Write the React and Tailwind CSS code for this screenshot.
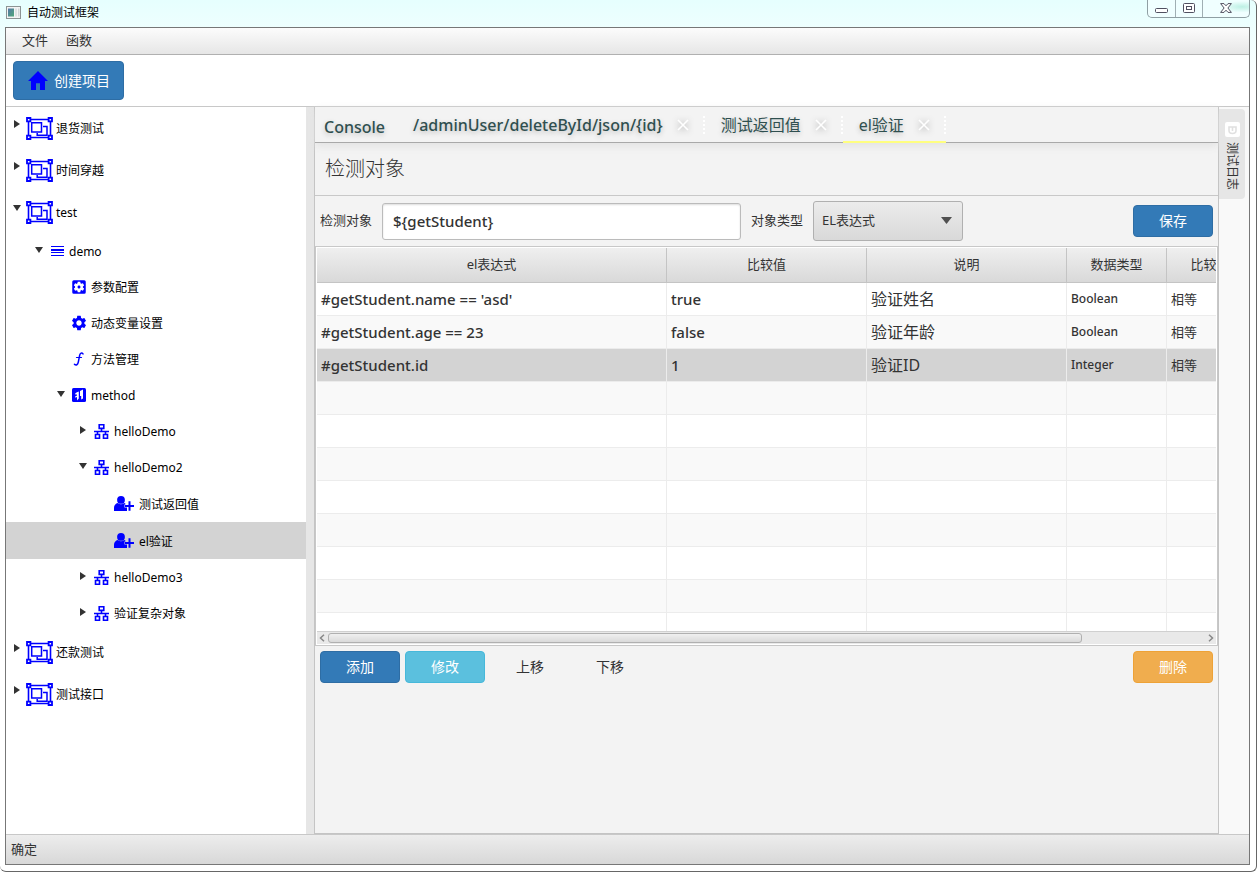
import React from "react";
import { MdHome, MdSettings, MdSettingsApplications } from "react-icons/md";

function GroupIcon() {
  return (
    <svg className="block h-[23px] w-[27px]" viewBox="0 0 27 23" fill="none" stroke="#0000ff" strokeWidth="1.5" aria-hidden="true">
      <path d="M5 2.5H22M5 20.5H22M2.5 5V18M24.5 5V18" strokeWidth="1.6" />
      <path d="M1 1h3.4v3.4H1zM22.6 1H26v3.4h-3.4zM1 18.6h3.4V22H1zM22.6 18.6H26V22h-3.4z" strokeWidth="1.8" />
      <path d="M5.700 5.700h9.800v9.300H5.700z" />
      <path d="M17 9.500h4V18.200H11.200V16" />
    </svg>
  );
}

function ListIcon() {
  return (
    <svg className="block h-3 w-[14px]" viewBox="0 0 14 12" fill="#0000ff" aria-hidden="true">
      <path d="M1 1h13v1H1zM1 4h13v2H1zM1 7h13v1H1zM1 10h13v1H1z" />
    </svg>
  );
}

function FunctionIcon() {
  return (
    <svg className="block h-[14px] w-[14px]" viewBox="0 0 14 14" fill="none" stroke="#0000ff" strokeLinecap="round" aria-hidden="true">
      <path d="M11 1.9C9.8.3 8.1 1 7.7 3.2L6.3 10.2C5.8 12.9 4.100 13.500 2.500 12.300" strokeWidth="1.500" />
      <path d="M4.500 5.500h5" strokeWidth="1.200" />
    </svg>
  );
}

function MethodIcon() {
  return (
    <svg className="block h-[14px] w-[14px]" viewBox="0 0 14 14" aria-hidden="true">
      <rect width="14" height="14" rx="1.5" fill="#0000ff" />
      <path d="M8 3 11 1.500V10.500L9.200 11.500V8H8zM6.800 3.500V10.500L5 12.500V9L3.300 9.800V8.200L5 7.400V6.400H3.300V5.200L5 4.200z" fill="#fff" />
    </svg>
  );
}

function NetworkIcon() {
  return (
    <svg className="block h-[15px] w-[15px]" viewBox="0 0 15 15" fill="none" stroke="#0000ff" strokeWidth="1.6" aria-hidden="true">
      <path d="M5.200.8h4.600v3.600H5.200zM1.500 10.500h4v3.700h-4zM9.500 10.500h4v3.700h-4z" />
      <path d="M7.500 4.300v3.200M0 7.500h15M3.500 7.500v3M11.500 7.500v3" />
    </svg>
  );
}

function PersonAddIcon() {
  return (
    <svg className="block h-[15px] w-5" viewBox="0 0 20 15" fill="#0000ff" aria-hidden="true">
      <circle cx="7" cy="3.900" r="3.900" />
      <path d="M0 15v-3.200C0 9.200 1.600 7.400 3.800 6.900 5.700 8.600 8.300 8.600 10.200 6.900l1.200.7V8.500H10.500V11.500H13V15z" />
      <path d="M14.500 5.200h2v3.700H20v2.200h-3.500v3.700h-2v-3.700H11V8.900h3.500z" />
    </svg>
  );
}

function Disclosure({ state }) {
  return (
    <svg className="mt-[13px] h-2 w-2 shrink-0" viewBox="0 0 8 8" fill="#333" aria-hidden="true">
      {state === "closed" && <path d="M1 0 7 4 1 8z" />}
      {state === "open" && <path d="M0 1H8L4 7z" />}
    </svg>
  );
}

const icons = {
  group: <GroupIcon />,
  list: <ListIcon />,
  config: <MdSettingsApplications className="-m-0.5 block size-[18px]" color="#0000ff" />,
  gear: <MdSettings className="-m-0.5 block size-[18px]" color="#0000ff" />,
  func: <FunctionIcon />,
  method: <MethodIcon />,
  network: <NetworkIcon />,
  person: <PersonAddIcon />,
};

const indents = ["pl-[7px]", "pl-[29px]", "pl-[51px]", "pl-[73px]", "pl-[93px]"];

const tree = [
  { level: 0, icon: "group", label: "退货测试", state: "closed" },
  { level: 0, icon: "group", label: "时间穿越", state: "closed" },
  { level: 0, icon: "group", label: "test", state: "open" },
  { level: 1, icon: "list", label: "demo", state: "open" },
  { level: 2, icon: "config", label: "参数配置" },
  { level: 2, icon: "gear", label: "动态变量设置" },
  { level: 2, icon: "func", label: "方法管理" },
  { level: 2, icon: "method", label: "method", state: "open" },
  { level: 3, icon: "network", label: "helloDemo", state: "closed" },
  { level: 3, icon: "network", label: "helloDemo2", state: "open" },
  { level: 4, icon: "person", label: "测试返回值" },
  { level: 4, icon: "person", label: "el验证", selected: true },
  { level: 3, icon: "network", label: "helloDemo3", state: "closed" },
  { level: 3, icon: "network", label: "验证复杂对象", state: "closed" },
  { level: 0, icon: "group", label: "还款测试", state: "closed" },
  { level: 0, icon: "group", label: "测试接口", state: "closed" },
];

function TreeRow({ level, icon, label, state, selected }) {
  const height = level === 0 ? "h-[42px]" : level === 4 ? "h-[37px]" : "h-9";
  const gap = level === 0 ? "gap-[3px] pl-[5px]" : "gap-[5px] pl-[7px]";
  return (
    <li
      role="treeitem"
      aria-level={level + 1}
      aria-selected={!!selected}
      aria-expanded={state ? state === "open" : undefined}
      className={`flex ${height} ${indents[level]} ${selected ? "bg-[#d3d3d3]" : ""}`}
    >
      <Disclosure state={state} />
      <span className={`flex items-center ${gap}`}>
        {icons[icon]}
        <span className="pt-0.5">{label}</span>
      </span>
    </li>
  );
}

function CloseX() {
  return (
    <svg className="block size-3 drop-shadow-[0_1px_3px_#aaa]" viewBox="0 0 12 12" stroke="#fff" strokeWidth="1.6" aria-hidden="true">
      <path d="M1 1 11 11M11 1 1 11" />
    </svg>
  );
}

function EditorTab({ label, active, weight = "font-normal" }) {
  return (
    <div className={`-mb-px flex h-9 items-center border-b-2 pt-0.5 pl-4 ${active ? "border-[#ffff80]" : "border-transparent"}`}>
      <button type="button" role="tab" aria-selected={!!active} className={`pr-[14px] [text-shadow:0_2px_5px_#bbb] ${weight}`}>
        {label}
      </button>
      <button type="button" aria-label={`关闭 ${label}`}>
        <CloseX />
      </button>
      <span className="ml-[14px] h-[18px] border-l-2 border-dotted border-white" />
    </div>
  );
}

const columns = [
  { title: "el表达式", width: "w-[350px]" },
  { title: "比较值", width: "w-[200px]" },
  { title: "说明", width: "w-[200px]" },
  { title: "数据类型", width: "w-[100px]" },
  { title: "比较方式", width: "w-[100px]" },
];

const rows = [
  ["#getStudent.name == 'asd'", "true", "验证姓名", "Boolean", "相等"],
  ["#getStudent.age == 23", "false", "验证年龄", "Boolean", "相等"],
  ["#getStudent.id", "1", "验证ID", "Integer", "相等"],
  ...Array.from({ length: 8 }, () => ["", "", "", "", ""]),
];

const cellText = ["text-[15px] font-medium", "text-[15px] font-medium", "text-base", "text-xs font-medium", "text-[13px]"];

function DataTable() {
  return (
    <div className="border border-[#c8c8c8] bg-white p-px">
      <div className="h-[383px] overflow-hidden">
        <table className="w-[950px] table-fixed border-separate border-spacing-0">
          <thead>
            <tr>
              {columns.map((c) => (
                <th
                  key={c.title}
                  scope="col"
                  className={`${c.width} h-[35px] border-r border-b border-[#c4c4c4] bg-linear-to-b from-[#efefef] to-[#d9d9d9] p-0 text-[13px] font-normal`}
                >
                  {c.title}
                </th>
              ))}
            </tr>
          </thead>
          <tbody>
            {rows.map((row, r) => (
              <tr key={r} className={r === 2 ? "bg-[#d3d3d3]" : r % 2 ? "bg-[#f9f9f9]" : "bg-white"}>
                {row.map((cell, c) => (
                  <td key={c} className={`h-[33px] overflow-hidden border-r border-b border-[#ececec] px-1 py-0 leading-5 whitespace-nowrap ${cellText[c]}`}>
                    {cell}
                  </td>
                ))}
              </tr>
            ))}
          </tbody>
        </table>
      </div>
      <div className="flex h-[13px] items-center gap-[3px] border-t border-[#d0d0d0] bg-[#e9e9e9] px-0.5">
        <svg className="h-2 w-[6px]" viewBox="0 0 6 8" fill="none" stroke="#888" strokeWidth="1.5" aria-hidden="true">
          <path d="M5 .7 1.500 4 5 7.300" />
        </svg>
        <div className="flex-1">
          <div className="h-[10px] w-[86%] rounded-[3px] border border-[#b0b0b0] bg-linear-to-b from-[#f0f0f0] to-[#dadada]" />
        </div>
        <svg className="h-2 w-[6px]" viewBox="0 0 6 8" fill="none" stroke="#888" strokeWidth="1.5" aria-hidden="true">
          <path d="M1 .7 4.500 4 1 7.300" />
        </svg>
      </div>
    </div>
  );
}

function ActionButton({ children, tone }) {
  return (
    <button type="button" className={`h-8 w-20 rounded-[4px] border text-sm ${tone}`}>
      {children}
    </button>
  );
}

const blueTone = "border-[#2e6da4] bg-[#337ab7] text-white";
const plainTone = "border-transparent";

function TitleBar() {
  return (
    <header className="flex h-[27px] justify-between">
      <div className="flex items-center gap-[6px] pb-0.5 pl-1.5">
        <svg className="h-[13px] w-[15px]" viewBox="0 0 15 13" aria-hidden="true">
          <defs>
            <linearGradient id="appGlass" x1="0" y1="0" x2="1" y2="1">
              <stop offset="0" stopColor="#5577a8" />
              <stop offset="1" stopColor="#4fa878" />
            </linearGradient>
          </defs>
          <rect x=".5" y=".5" width="14" height="12" fill="#f4f4f4" stroke="#8c9494" />
          <rect x="2" y="2.500" width="6" height="8" fill="url(#appGlass)" />
          <rect x="9" y="2.500" width="2" height="8" fill="#dde3e3" />
          <rect x="12" y="2.500" width="1.500" height="8" fill="#cfd6d6" />
        </svg>
        <h1 className="text-xs text-black">自动测试框架</h1>
      </div>
      <div className="mr-1.5 flex h-[18px] rounded-b-[5px] border border-t-0 border-[#8f9fa3] bg-[#f0ffff]">
        <button type="button" aria-label="最小化" className="flex w-7 items-center justify-center border-r border-[#a0afb3]">
          <svg className="mt-1 h-[5px] w-[13px]" viewBox="0 0 13 5" aria-hidden="true">
            <rect x=".5" y=".5" width="12" height="4" rx="1" fill="#fff" stroke="#505060" />
          </svg>
        </button>
        <button type="button" aria-label="最大化" className="flex w-[27px] items-center justify-center border-r border-[#a0afb3] pb-0.5">
          <svg className="h-[10px] w-3" viewBox="0 0 12 10" fill="#fff" stroke="#505060" aria-hidden="true">
            <rect x=".5" y=".5" width="11" height="9" rx="1" />
            <rect x="3.500" y="3.500" width="5" height="3" />
          </svg>
        </button>
        <button type="button" aria-label="关闭" className="flex w-[46px] items-center justify-center bg-radial-[at_85%_40%] from-[#bdf0e4] to-transparent to-40% pb-0.5">
          <svg className="h-[10px] w-3" viewBox="0 0 12 10" fill="#fff" stroke="#505060" strokeLinejoin="round" aria-hidden="true">
            <path d="M.6.6H4L6 2.800 8 .6h3.400L7.900 5l3.500 4.400H8L6 7.200 4 9.400H.6L4.100 5z" />
          </svg>
        </button>
      </div>
    </header>
  );
}

export default function App() {
  return (
    <div className="min-h-screen bg-white font-['Noto_Sans','Noto_Sans_CJK_SC',sans-serif] text-[#333]">
      <div className="mr-px flex min-h-screen flex-col rounded-tr-[6px] rounded-b-[6px] border-r border-b border-[#666] bg-linear-to-b from-[#e6fffe] to-white to-[90px]">
        <TitleBar />
        <div className="mr-[6px] mb-[6px] ml-[5px] flex flex-1 flex-col border border-[#777] bg-white">
          <nav className="flex h-[27px] items-center gap-[18px] border-b border-[#b0b0b0] bg-linear-to-b from-[#fcfcfc] to-[#e6e6e6] pl-4 text-[13px]">
            <button type="button">文件</button>
            <button type="button">函数</button>
          </nav>
          <div className="flex h-[52px] items-center border-b border-[#c8c8c8] pl-[7px]">
            <button type="button" className="flex h-[39px] items-center gap-[6px] rounded-[4px] border border-[#2e6da4] bg-[#337ab7] pr-[13px] pl-[14px] text-sm text-white">
              <MdHome viewBox="2 3 20 17" className="h-[19px] w-5" color="#0000ff" preserveAspectRatio="none" />
              创建项目
            </button>
          </div>
          <div className="flex flex-1">
            <ul role="tree" aria-label="项目" className="w-[300px] shrink-0 text-xs text-black">
              {tree.map((node, i) => (
                <TreeRow key={i} {...node} />
              ))}
            </ul>
            <div className="w-2 shrink-0 bg-[#e6e6e6]" />
            <main className="min-w-0 flex-1 border-r border-b border-l border-[#c4c4c4] bg-[#f3f3f3]">
              <div role="tablist" className="flex h-9 border-b border-[#a9a9a9] text-base text-[#2f4f4f] shadow-[0_3px_8px_#e2e2e2]">
                <button type="button" role="tab" aria-selected="false" className="pt-1 pr-3 pl-[9px] font-medium [text-shadow:0_2px_5px_#bbb]">
                  Console
                </button>
                <EditorTab label="/adminUser/deleteById/json/{id}" weight="font-medium" />
                <EditorTab label="测试返回值" />
                <EditorTab label="el验证" active />
              </div>
              <h2 className="flex h-[53px] items-center border-b border-[#c8c8c8] pl-[10px] text-xl font-light">检测对象</h2>
              <form className="flex h-[50px] items-center pr-[5px] pl-[5px] text-[13px]" onSubmit={(e) => e.preventDefault()}>
                <label htmlFor="target">检测对象</label>
                <input
                  id="target"
                  defaultValue="${getStudent}"
                  className="ml-[10px] h-[37px] w-[359px] rounded-[3px] border border-[#bbb] bg-white px-[10px] text-[15px] font-medium shadow-[inset_0_1px_2px_#ddd]"
                />
                <label htmlFor="kind" className="ml-[10px]">对象类型</label>
                <div className="relative ml-[10px]">
                  <select
                    id="kind"
                    defaultValue="el"
                    className="block h-10 w-[150px] appearance-none rounded-[3px] border border-[#b0b0b0] bg-linear-to-b from-[#ececec] to-[#d9d9d9] px-2 text-[13px]"
                  >
                    <option value="el">EL表达式</option>
                  </select>
                  <svg className="pointer-events-none absolute top-4 right-[11px] h-[7px] w-[11px]" viewBox="0 0 11 7" fill="#505050" aria-hidden="true">
                    <path d="M0 0H11L5.500 7z" />
                  </svg>
                </div>
                <span className="flex-1" />
                <ActionButton tone={blueTone}>保存</ActionButton>
              </form>
              <DataTable />
              <div className="flex items-center p-[5px]">
                <ActionButton tone={blueTone}>添加</ActionButton>
                <span className="w-[5px]" />
                <ActionButton tone="border-[#46b8da] bg-[#5bc0de] text-white">修改</ActionButton>
                <span className="w-[5px]" />
                <ActionButton tone={plainTone}>上移</ActionButton>
                <ActionButton tone={plainTone}>下移</ActionButton>
                <span className="flex-1" />
                <ActionButton tone="border-[#eea236] bg-[#f0ad4e] text-white">删除</ActionButton>
              </div>
            </main>
            <aside className="w-[30px] shrink-0 bg-[#f9f9f9] pt-0.5">
              <button type="button" className="flex h-[90px] w-[26px] flex-col items-center gap-[5px] rounded-r-[4px] bg-[#e6e6e6] pt-[13px] text-xs">
                <svg className="size-[15px]" viewBox="0 0 15 15" aria-hidden="true">
                  <rect width="15" height="15" rx="2" fill="#fff" />
                  <path d="M4 5V8.500q0 3 3.500 3T11 8.500V5zM7.500 5v4" fill="none" stroke="#e0e0e0" strokeWidth="1.600" />
                </svg>
                <span className="[text-orientation:sideways] [writing-mode:vertical-rl]">测试日志</span>
              </button>
            </aside>
          </div>
          <footer className="flex h-[30px] items-center border-t border-[#c8c8c8] bg-linear-to-b from-[#ededed] to-[#d8d8d8] pl-[5px] text-[13px]">
            确定
          </footer>
        </div>
      </div>
    </div>
  );
}
